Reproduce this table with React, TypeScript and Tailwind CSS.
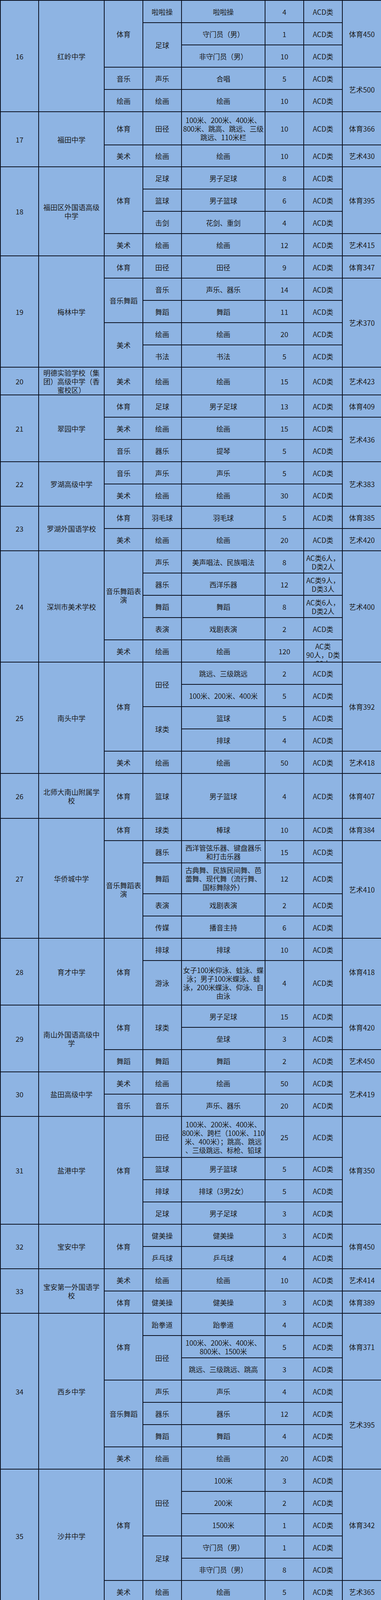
import React from "react";

type Leaf = {
  c?: string; // category
  cs?: number;
  s?: string; // sub item
  ss?: number;
  i: string; // project
  n: string; // count
  t?: string; // type
  tot?: string; // score line
  ts?: number;
  h?: number;
  clip?: boolean;
};

type School = { no: string; name: string; rows: Leaf[] };

const schools: School[] = [
  {
    no: "16",
    name: "红岭中学",
    rows: [
      { c: "体育", cs: 3, s: "啦啦操", i: "啦啦操", n: "4", tot: "体育450", ts: 3 },
      { s: "足球", ss: 2, i: "守门员（男）", n: "1" },
      { i: "非守门员（男）", n: "10" },
      { c: "音乐", s: "声乐", i: "合唱", n: "5", tot: "艺术500", ts: 2 },
      { c: "绘画", s: "绘画", i: "绘画", n: "10" },
    ],
  },
  {
    no: "17",
    name: "福田中学",
    rows: [
      { c: "体育", s: "田径", i: "100米、200米、400米、\n800米、跳高、跳远、三级\n跳远、110米栏", n: "10", tot: "体育366", h: 86 },
      { c: "美术", s: "绘画", i: "绘画", n: "10", tot: "艺术430", h: 57 },
    ],
  },
  {
    no: "18",
    name: "福田区外国语高级\n中学",
    rows: [
      { c: "体育", cs: 3, s: "足球", i: "男子足球", n: "8", tot: "体育395", ts: 3 },
      { s: "篮球", i: "男子篮球", n: "6" },
      { s: "击剑", i: "花剑、重剑", n: "4" },
      { c: "美术", s: "绘画", i: "绘画", n: "12", tot: "艺术415" },
    ],
  },
  {
    no: "19",
    name: "梅林中学",
    rows: [
      { c: "体育", s: "田径", i: "田径", n: "9", tot: "体育347" },
      { c: "音乐舞蹈", cs: 2, s: "音乐", i: "声乐、器乐", n: "14", tot: "艺术370", ts: 4 },
      { s: "舞蹈", i: "舞蹈", n: "11" },
      { c: "美术", cs: 2, s: "绘画", i: "绘画", n: "20" },
      { s: "书法", i: "书法", n: "5" },
    ],
  },
  {
    no: "20",
    name: "明德实验学校（集\n团）高级中学（香\n蜜校区）",
    rows: [{ c: "美术", s: "绘画", i: "绘画", n: "15", tot: "艺术423", h: 72 }],
  },
  {
    no: "21",
    name: "翠园中学",
    rows: [
      { c: "体育", s: "足球", i: "男子足球", n: "13", tot: "体育409" },
      { c: "美术", s: "绘画", i: "绘画", n: "15", tot: "艺术436", ts: 2 },
      { c: "音乐", s: "器乐", i: "提琴", n: "5" },
    ],
  },
  {
    no: "22",
    name: "罗湖高级中学",
    rows: [
      { c: "音乐", s: "声乐", i: "声乐", n: "5", tot: "艺术383", ts: 2 },
      { c: "美术", s: "绘画", i: "绘画", n: "30" },
    ],
  },
  {
    no: "23",
    name: "罗湖外国语学校",
    rows: [
      { c: "体育", s: "羽毛球", i: "羽毛球", n: "5", tot: "体育385" },
      { c: "美术", s: "绘画", i: "绘画", n: "20", tot: "艺术420" },
    ],
  },
  {
    no: "24",
    name: "深圳市美术学校",
    rows: [
      { c: "音乐舞蹈表\n演", cs: 4, s: "声乐", i: "美声唱法、民族唱法", n: "8", t: "AC类6人，\nD类2人", tot: "艺术400", ts: 5 },
      { s: "器乐", i: "西洋乐器", n: "12", t: "AC类9人，\nD类3人" },
      { s: "舞蹈", i: "舞蹈", n: "8", t: "AC类6人，\nD类2人" },
      { s: "表演", i: "戏剧表演", n: "2" },
      { c: "美术", s: "绘画", i: "绘画", n: "120", t: "AC类\n90人，D类\n30人", clip: true },
    ],
  },
  {
    no: "25",
    name: "南头中学",
    rows: [
      { c: "体育", cs: 4, s: "田径", ss: 2, i: "跳远、三级跳远", n: "2", tot: "体育392", ts: 4 },
      { i: "100米、200米、400米", n: "5" },
      { s: "球类", ss: 2, i: "篮球", n: "5" },
      { i: "排球", n: "4" },
      { c: "美术", s: "绘画", i: "绘画", n: "50", tot: "艺术418" },
    ],
  },
  {
    no: "26",
    name: "北师大南山附属学\n校",
    rows: [{ c: "体育", s: "篮球", i: "男子篮球", n: "4", tot: "体育407", h: 116 }],
  },
  {
    no: "27",
    name: "华侨城中学",
    rows: [
      { c: "体育", s: "球类", i: "棒球", n: "10", tot: "体育384" },
      { c: "音乐舞蹈表\n演", cs: 4, s: "器乐", i: "西洋管弦乐器、键盘器乐\n和打击乐器", n: "15", tot: "艺术410", ts: 4 },
      { s: "舞蹈", i: "古典舞、民族民间舞、芭\n蕾舞、现代舞（流行舞、\n国标舞除外）", n: "12", h: 80 },
      { s: "表演", i: "戏剧表演", n: "2" },
      { s: "传媒", i: "播音主持", n: "6" },
    ],
  },
  {
    no: "28",
    name: "育才中学",
    rows: [
      { c: "体育", cs: 2, s: "排球", i: "排球", n: "10", tot: "体育418", ts: 2 },
      { s: "游泳", i: "女子100米仰泳、蛙泳、蝶\n泳；男子100米蝶泳、蛙\n泳，200米蝶泳、仰泳、自\n由泳", n: "4", h: 115 },
    ],
  },
  {
    no: "29",
    name: "南山外国语高级中\n学",
    rows: [
      { c: "体育", cs: 2, s: "球类", ss: 2, i: "男子足球", n: "15", tot: "体育420", ts: 2 },
      { i: "垒球", n: "3" },
      { c: "舞蹈", s: "舞蹈", i: "舞蹈", n: "2", tot: "艺术450" },
    ],
  },
  {
    no: "30",
    name: "盐田高级中学",
    rows: [
      { c: "美术", s: "绘画", i: "绘画", n: "50", tot: "艺术419", ts: 2 },
      { c: "音乐", s: "音乐", i: "声乐、器乐", n: "20" },
    ],
  },
  {
    no: "31",
    name: "盐港中学",
    rows: [
      { c: "体育", cs: 4, s: "田径", i: "100米、200米、400米、\n800米、跨栏（100米、110\n米、400米）；跳高、跳远\n、三级跳远、标枪、铅球", n: "25", tot: "体育350", ts: 4, h: 106 },
      { s: "篮球", i: "男子篮球", n: "5" },
      { s: "排球", i: "排球（3男2女）", n: "5" },
      { s: "足球", i: "男子足球", n: "3" },
    ],
  },
  {
    no: "32",
    name: "宝安中学",
    rows: [
      { c: "体育", cs: 2, s: "健美操", i: "健美操", n: "3", tot: "体育450", ts: 2 },
      { s: "乒乓球", i: "乒乓球", n: "4" },
    ],
  },
  {
    no: "33",
    name: "宝安第一外国语学\n校",
    rows: [
      { c: "美术", s: "绘画", i: "绘画", n: "10", tot: "艺术414" },
      { c: "体育", s: "健美操", i: "健美操", n: "3", tot: "体育389" },
    ],
  },
  {
    no: "34",
    name: "西乡中学",
    rows: [
      { c: "体育", cs: 3, s: "跆拳道", i: "跆拳道", n: "4", tot: "体育371", ts: 3 },
      { s: "田径", ss: 2, i: "100米、200米、400米、\n800米、1500米", n: "5" },
      { i: "跳远、三级跳远、跳高", n: "3" },
      { c: "音乐舞蹈", cs: 3, s: "声乐", i: "声乐", n: "4", tot: "艺术395", ts: 4 },
      { s: "器乐", i: "器乐", n: "12" },
      { s: "舞蹈", i: "舞蹈", n: "4" },
      { c: "美术", s: "绘画", i: "绘画", n: "20" },
    ],
  },
  {
    no: "35",
    name: "沙井中学",
    rows: [
      { c: "体育", cs: 5, s: "田径", ss: 3, i: "100米", n: "3", tot: "体育342", ts: 5 },
      { i: "200米", n: "2" },
      { i: "1500米", n: "1" },
      { s: "足球", ss: 2, i: "守门员（男）", n: "1" },
      { i: "非守门员（男）", n: "8" },
      { c: "美术", s: "绘画", i: "绘画", n: "5", tot: "艺术365" },
    ],
  },
];

const cell =
  "border-2 border-[#0b1120] p-0 text-center align-middle whitespace-pre-line leading-[22px]";

export default function App() {
  return (
    <div className="w-[976px] bg-[#8eb4e3] text-[18px] text-[#1b1b1b] font-['Noto_Sans_CJK_SC','Liberation_Sans',sans-serif]">
      <table className="w-[976px] table-fixed border-collapse bg-[#8eb4e3]">
        <colgroup>
          <col className="w-[98px]" />
          <col className="w-[168px]" />
          <col className="w-[99px]" />
          <col className="w-[99px]" />
          <col className="w-[214px]" />
          <col className="w-[99px]" />
          <col className="w-[99px]" />
          <col className="w-[100px]" />
        </colgroup>
        <tbody>
          {schools.map((sc) =>
            sc.rows.map((r, idx) => (
              // the collapsed border adds one pixel to every row, so take it off here
              <tr key={sc.no + "-" + idx} style={{ height: (r.h ?? 58) - 1 }}>
                {idx === 0 && (
                  <>
                    <td rowSpan={sc.rows.length} className={cell}>
                      {sc.no}
                    </td>
                    <td rowSpan={sc.rows.length} className={cell}>
                      {sc.name}
                    </td>
                  </>
                )}
                {r.c && (
                  <td rowSpan={r.cs ?? 1} className={cell}>
                    {r.c}
                  </td>
                )}
                {r.s && (
                  <td rowSpan={r.ss ?? 1} className={cell}>
                    {r.s}
                  </td>
                )}
                <td className={cell + " whitespace-pre tracking-[-0.3px]"}>{r.i}</td>
                <td className={cell}>{r.n}</td>
                <td className={cell}>
                  {r.clip ? (
                    <div className="h-[54px] overflow-hidden pt-[3px]">{r.t}</div>
                  ) : (
                    r.t ?? "ACD类"
                  )}
                </td>
                {r.tot && (
                  <td rowSpan={r.ts ?? 1} className={cell}>
                    {r.tot}
                  </td>
                )}
              </tr>
            ))
          )}
        </tbody>
      </table>
    </div>
  );
}
